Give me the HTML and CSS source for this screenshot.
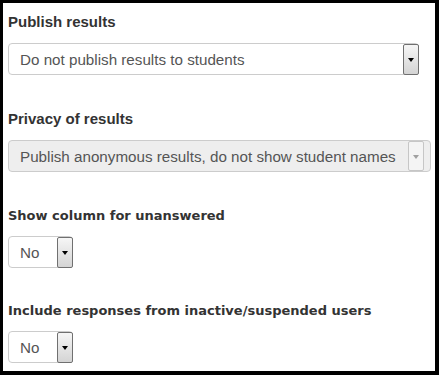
FILE: index.html
```html
<!DOCTYPE html>
<html lang="en">
<head>
  <meta charset="UTF-8">
  <title>Results settings</title>
  <link rel="stylesheet" href="styles.css">
</head>
<body>
  <div class="panel">
    <div class="form-group">
      <label class="label">Publish results</label>
      <div class="select select-wide">
        <span class="select-value">Do not publish results to students</span>
        <span class="select-arrow"></span>
      </div>
    </div>

    <div class="form-group">
      <label class="label">Privacy of results</label>
      <div class="select select-disabled">
        <span class="select-value">Publish anonymous results, do not show student names</span>
        <span class="select-arrow"></span>
      </div>
    </div>

    <div class="form-group">
      <label class="label label-alt">Show column for unanswered</label>
      <div class="select select-small">
        <span class="select-value">No</span>
        <span class="select-arrow"></span>
      </div>
    </div>

    <div class="form-group">
      <label class="label label-alt">Include responses from inactive/suspended users</label>
      <div class="select select-small">
        <span class="select-value">No</span>
        <span class="select-arrow"></span>
      </div>
    </div>
  </div>
</body>
</html>
```

FILE: styles.css
```css
* {
  box-sizing: border-box;
}

body {
  margin: 0;
  background: #000;
  font-family: 'Liberation Sans', Arial, sans-serif;
}

.panel {
  background: #fff;
  margin: 3px 4px 4px 3px;
  height: 368px;
  padding: 9px 5px 0;
  overflow: hidden;
}

.form-group {
  margin-bottom: 34px;
}

.form-group:nth-child(3) {
  margin-bottom: 33px;
}

.label {
  display: block;
  font-size: 15px;
  line-height: 20px;
  font-weight: 700;
  color: #333;
  margin-bottom: 11px;
}

.label-alt {
  font-family: 'DejaVu Sans', Verdana, sans-serif;
  font-size: 13px;
  margin-bottom: 10px;
}

.select {
  display: flex;
  align-items: center;
  height: 32px;
  border: 1px solid #ccc;
  border-radius: 4px;
  background: #fff;
  padding-left: 11px;
  color: #555;
  font-size: 15.2px;
}

.select-wide {
  width: 411px;
}

.select-disabled {
  display: inline-flex;
  background: #eee;
  padding-right: 6px;
}

.select-small {
  display: inline-flex;
  width: 65px;
}

.select-value {
  flex: 1;
  white-space: nowrap;
}

.select-arrow {
  position: relative;
  width: 16px;
  height: 31px;
  margin-top: -1px;
  margin-bottom: -1px;
  border: 1px solid #707070;
  border-radius: 2px;
  background: linear-gradient(#f6f6f6, #d4d4d4);
}

.select-wide .select-arrow,
.select-small .select-arrow {
  margin-right: -1px;
}

.select-disabled .select-value {
  margin-right: 12px;
}

.select-disabled .select-arrow {
  border-color: #c6c6c6;
  background: #f4f4f4;
  height: 30px;
}

.select-arrow::after {
  content: "";
  position: absolute;
  left: 4px;
  top: 13px;
  border-left: 3.5px solid transparent;
  border-right: 3.5px solid transparent;
  border-top: 4px solid #000;
}

.select-disabled .select-arrow::after {
  border-top-color: #a0a0a0;
}
```
